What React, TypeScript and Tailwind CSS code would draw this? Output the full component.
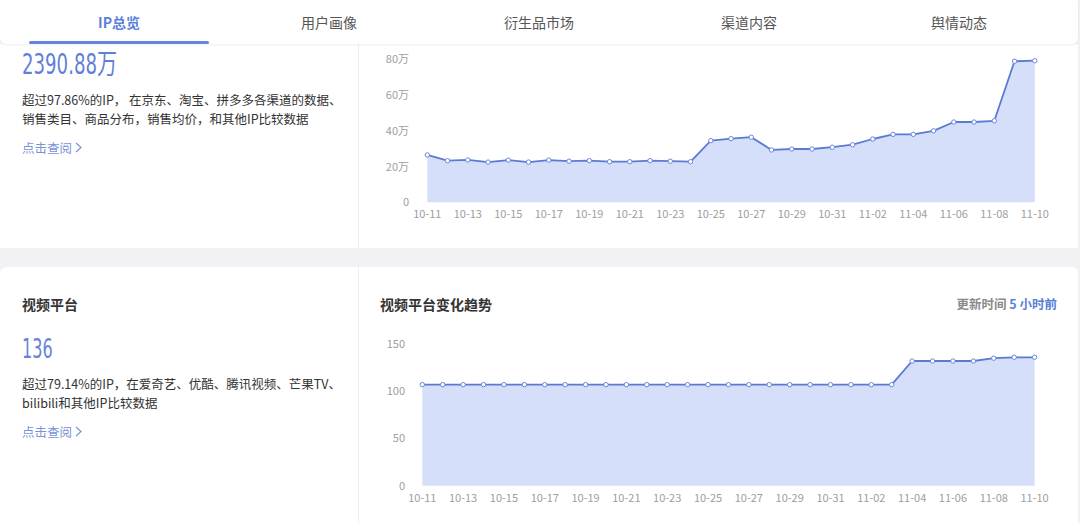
import React from "react";

const CN = "font-['Microsoft_YaHei','Noto_Sans_CJK_SC','Noto_Sans',sans-serif]";
const NUM = "font-['DejaVu_Sans_Condensed','Noto_Sans_CJK_SC',sans-serif]";

const TABS = ["IP总览", "用户画像", "衍生品市场", "渠道内容", "舆情动态"];

// 10-11 ~ 11-10
const DATES: string[] = [];
for (let d = 11; d <= 31; d++) DATES.push(`10-${d}`);
for (let d = 1; d <= 10; d++) DATES.push(`11-${d < 10 ? "0" + d : d}`);

const SALES = [
  26.5, 23.3, 23.7, 22.5, 23.6, 22.5, 23.6, 23, 23.3, 22.7, 22.7, 23.3, 23, 22.7,
  34.5, 35.6, 36.4, 29.3, 29.8, 29.8, 30.8, 32.2, 35.4, 38, 38, 40, 44.9, 44.9, 45.6,
  78.9, 79.2,
];

const VIDEO = [
  ...Array(24).fill(107),
  132, 132, 132, 132, 135, 136, 136,
];

interface ChartProps {
  width: number;
  height: number;
  data: number[];
  x0: number;
  step: number;
  y0: number;
  scale: number;
  ticks: { v: number; label: string }[];
  yLabelX: number;
  xLabelY: number;
}

function AreaChart({ width, height, data, x0, step, y0, scale, ticks, yLabelX, xLabelY }: ChartProps) {
  const pts = data.map((v, i) => [x0 + step * i, y0 - v * scale] as const);
  const line = pts.map((p, i) => `${i === 0 ? "M" : "L"}${p[0].toFixed(1)},${p[1].toFixed(1)}`).join(" ");
  const area = `${line} L${pts[pts.length - 1][0].toFixed(1)},${y0} L${pts[0][0].toFixed(1)},${y0} Z`;

  return (
    <svg width={width} height={height} className={`block overflow-visible ${CN}`}>
      {ticks.map((t) => (
        <text key={t.label} x={yLabelX} y={y0 - t.v * scale + 4} textAnchor="end" fontSize="11" fill="#9e9e9e">
          {t.label}
        </text>
      ))}
      <path d={area} fill="#d5dffa" />
      <path d={line} fill="none" stroke="#5b7bd3" strokeWidth="1.8" strokeLinejoin="round" />
      {pts.map((p, i) => (
        <circle key={i} cx={p[0]} cy={p[1]} r="2.2" fill="#fff" stroke="#6b88d8" strokeWidth="1" />
      ))}
      {DATES.map((d, i) =>
        i % 2 === 0 ? (
          <text key={d} x={x0 + step * i} y={xLabelY + 4} textAnchor="middle" fontSize="11" fill="#9e9e9e">
            {d}
          </text>
        ) : null
      )}
    </svg>
  );
}

function Chevron() {
  return (
    <svg width="7" height="11" viewBox="0 0 7 11" className="ml-[3px]">
      <polyline points="1,1 6,5.5 1,10" fill="none" stroke="#7b93d6" strokeWidth="1.2" />
    </svg>
  );
}

export default function App() {
  return (
    <div className={`w-[1080px] h-[523px] overflow-hidden bg-[#f2f2f4] ${CN}`}>
      {/* onglets */}
      <div className="relative z-10 mr-[2px] h-[44px] bg-white rounded-b-[6px] shadow-[0_1px_3px_rgba(0,0,0,0.07)] flex px-[14px]">
        {TABS.map((t, i) => (
          <div key={t} className="relative flex-1 flex items-center justify-center">
            <span className={`text-[14px] ${i === 0 ? "text-[#5b7fdc] font-bold" : "text-[#555]"}`}>{t}</span>
            {i === 0 && <div className="absolute left-[15px] right-[15px] bottom-0 h-[3px] bg-[#6486e0] rounded-full" />}
          </div>
        ))}
      </div>

      {/* carte ventes */}
      <div className="mr-[2px] h-[204px] bg-white flex">
        <div className="w-[359px] border-r border-[#ededed] pl-[22px] pt-[5px]">
          <div className={`${NUM} text-[28px] leading-[32px] text-[#5f7fd8] origin-left scale-x-[0.72] whitespace-nowrap`}>2390.88万</div>
          <p className="mt-[9px] text-[12.5px] leading-[19px] text-[#333]">
            超过97.86%的IP， 在京东、淘宝、拼多多各渠道的数据、
            <br />
            销售类目、商品分布，销售均价，和其他IP比较数据
          </p>
          <div className="mt-[10px] flex items-center text-[12.5px] leading-[19px] text-[#7b93d6]">
            点击查阅
            <Chevron />
          </div>
        </div>
        <div className="flex-1">
          <AreaChart
            width={718}
            height={204}
            data={SALES}
            x0={68.3}
            step={20.25}
            y0={158.3}
            scale={1.7875}
            ticks={[
              { v: 0, label: "0" },
              { v: 20, label: "20万" },
              { v: 40, label: "40万" },
              { v: 60, label: "60万" },
              { v: 80, label: "80万" },
            ]}
            yLabelX={50}
            xLabelY={170}
          />
        </div>
      </div>

      <div className="h-[19px]" />

      {/* carte plateformes vidéo */}
      <div className="mr-[2px] h-[256px] bg-white rounded-t-[6px] flex">
        <div className="w-[359px] border-r border-[#ededed] pl-[22px] pt-[27px]">
          <div className="text-[14px] leading-[20px] font-bold text-[#333]">视频平台</div>
          <div className={`mt-[19px] ${NUM} text-[27px] leading-[32px] text-[#6a82d8] origin-left scale-x-[0.66] whitespace-nowrap`}>136</div>
          <p className="mt-[10px] text-[12.5px] leading-[18.5px] text-[#333]">
            超过79.14%的IP，在爱奇艺、优酷、腾讯视频、芒果TV、
            <br />
            bilibili和其他IP比较数据
          </p>
          <div className="mt-[10px] flex items-center text-[12.5px] leading-[19px] text-[#7b93d6]">
            点击查阅
            <Chevron />
          </div>
        </div>
        <div className="flex-1 flex flex-col">
          <div className="h-[74px] flex items-center justify-between pl-[21px] pr-[21px]">
            <span className="text-[14px] font-bold text-[#333]">视频平台变化趋势</span>
            <span className="text-[12.5px] font-bold text-[#8a8a8a]">
              更新时间 <span className="text-[#5b7fd6]">5 小时前</span>
            </span>
          </div>
          <AreaChart
            width={718}
            height={182}
            data={VIDEO}
            x0={63.3}
            step={20.41}
            y0={144.7}
            scale={0.9444}
            ticks={[
              { v: 0, label: "0" },
              { v: 50, label: "50" },
              { v: 100, label: "100" },
              { v: 150, label: "150" },
            ]}
            yLabelX={46}
            xLabelY={157}
          />
        </div>
      </div>
    </div>
  );
}
